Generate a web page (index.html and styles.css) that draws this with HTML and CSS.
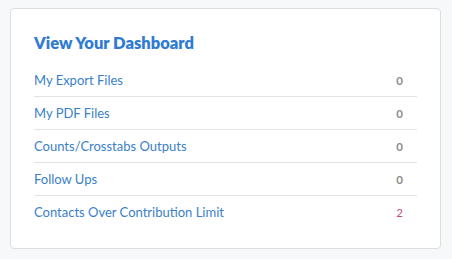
FILE: index.html
```html
<!DOCTYPE html>
<html lang="en">

<head>
  <meta charset="UTF-8">
  <meta name="viewport" content="width=device-width, initial-scale=1.0">
  <title>Dashboard</title>
  <link rel="stylesheet" href="styles.css">
</head>

<body>
  <div class="card">
    <h2 class="cardTitle">View Your Dashboard</h2>
    <ul class="dashList">
      <li class="dashItem"><a href="#">My Export Files</a><span class="count">0</span></li>
      <li class="dashItem"><a href="#">My PDF Files</a><span class="count">0</span></li>
      <li class="dashItem"><a href="#">Counts/Crosstabs Outputs</a><span class="count">0</span></li>
      <li class="dashItem"><a href="#">Follow Ups</a><span class="count">0</span></li>
      <li class="dashItem"><a href="#">Contacts Over Contribution Limit</a><span class="count alert">2</span></li>
    </ul>
  </div>
</body>

</html>
```

FILE: styles.css
```css
body {
  font-family: Lato, "Liberation Sans", sans-serif;
  margin: 0;
  padding: 8px 11px 12px 10px;
  background-color: #f7f8f9;
}

.card {
  background-color: #ffffff;
  border: 1px solid #dcdfe2;
  border-radius: 4px;
  padding: 24px 23px 20px 23px;
}

.cardTitle {
  margin: 0 0 11px 0;
  font-size: 16.5px;
  line-height: 20px;
  font-weight: 800;
  color: #2f7bd2;
}

.dashList {
  list-style-type: none;
  padding: 0;
  margin: 0;
}

.dashItem {
  display: flex;
  justify-content: space-between;
  align-items: center;
  height: 32px;
  border-bottom: 1px solid #e2e3e5;
  padding-right: 14px;
  font-size: 13px;
}

.dashItem:last-child {
  border-bottom: none;
}

.dashItem a {
  color: #3a7fc8;
  text-decoration: none;
}

.count {
  font-weight: bold;
  color: #8c8c8c;
  font-size: 11.5px;
}

.count.alert {
  font-weight: normal;
  color: #c54b7c;
}
```
